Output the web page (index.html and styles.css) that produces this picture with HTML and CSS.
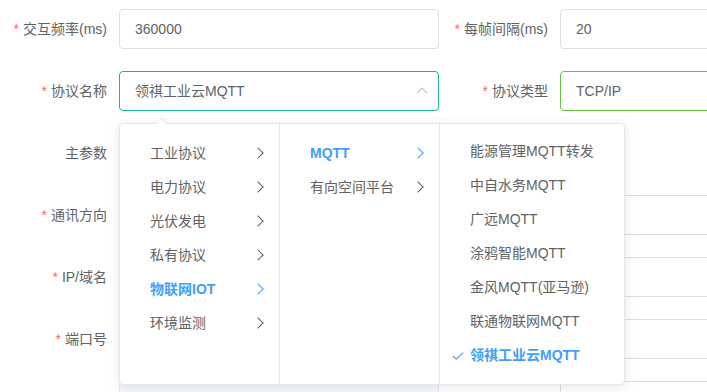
FILE: index.html
```html
<!DOCTYPE html>
<html>
  <head>
    <title>协议配置</title>
    <link rel="stylesheet" href="styles.css">
  </head>
  <body>
    <div class="page">
    <form class="form">
      <!-- row 1 -->
      <label class="label"><span class="req">*</span>交互频率(ms)</label>
      <div class="input">360000</div>
      <label class="label"><span class="req">*</span>每帧间隔(ms)</label>
      <div class="input">20</div>

      <!-- row 2 -->
      <label class="label"><span class="req">*</span>协议名称</label>
      <div class="select-wrap">
        <div class="input select">
          <span>领祺工业云MQTT</span>
          <svg class="caret" width="12" height="7" viewBox="0 0 12 7">
            <path d="M1 6 L6 1 L11 6" fill="none" stroke="#c0c4cc" stroke-width="1.2" />
          </svg>
        </div>

        <!-- cascader dropdown -->
        <div class="cascader">
          <div class="menu">
            <ul>
              <li>工业协议<i class="arrow"></i></li>
              <li>电力协议<i class="arrow"></i></li>
              <li>光伏发电<i class="arrow"></i></li>
              <li>私有协议<i class="arrow"></i></li>
              <li class="active">物联网IOT<i class="arrow"></i></li>
              <li>环境监测<i class="arrow"></i></li>
            </ul>
          </div>
          <div class="menu">
            <ul>
              <li class="active">MQTT<i class="arrow"></i></li>
              <li>有向空间平台<i class="arrow"></i></li>
            </ul>
          </div>
          <div class="menu menu-last">
            <ul>
              <li>能源管理MQTT转发</li>
              <li>中自水务MQTT</li>
              <li>广远MQTT</li>
              <li>涂鸦智能MQTT</li>
              <li>金风MQTT(亚马逊)</li>
              <li>联通物联网MQTT</li>
              <li class="active">
                <svg class="check" width="12" height="8" viewBox="0 0 12 8">
                  <path d="M0.7 3.8 L4.2 7.2 L11.3 0.7" fill="none" stroke="#409eff" stroke-width="1.1" />
                </svg>领祺工业云MQTT
              </li>
            </ul>
          </div>
        </div>
      </div>
      <label class="label"><span class="req">*</span>协议类型</label>
      <div class="input ok">TCP/IP</div>

      <!-- row 3 -->
      <label class="label">主参数</label>
      <div></div>
      <div></div>
      <div></div>

      <!-- row 4 -->
      <label class="label"><span class="req">*</span>通讯方向</label>
      <div class="input"></div>
      <label class="label"></label>
      <div class="input"></div>

      <!-- row 5 -->
      <label class="label"><span class="req">*</span>IP/域名</label>
      <div class="input"></div>
      <label class="label"></label>
      <div class="input"></div>

      <!-- row 6 -->
      <label class="label"><span class="req">*</span>端口号</label>
      <div class="input"></div>
      <label class="label"></label>
      <div class="input"></div>

      <!-- row 7 -->
      <label class="label"></label>
      <div class="input disabled"></div>
      <label class="label"></label>
      <div class="input"></div>
    </form>
    </div>
  </body>
</html>
```

FILE: styles.css
```css
html, body {
  margin: 0;
  padding: 0;
  background: #fff;
  overflow: hidden;
}
body {
  font-family: "Liberation Sans", "Noto Sans CJK SC", sans-serif;
  font-size: 14px;
  color: #606266;
}
.page {
  width: 707px;
  height: 392px;
  overflow: hidden;
}
.form {
  display: grid;
  grid-template-columns: 119px 320px 121px 320px;
  grid-auto-rows: 40px;
  row-gap: 22px;
  padding-top: 9px;
  width: 880px;
}
.label {
  text-align: right;
  padding-right: 12px;
  line-height: 40px;
  color: #606266;
  white-space: nowrap;
}
.req {
  color: #f56c6c;
  margin-right: 4px;
}
.input {
  box-sizing: border-box;
  height: 40px;
  line-height: 38px;
  border: 1px solid #dcdfe6;
  border-radius: 4px;
  padding: 0 15px;
  background: #fff;
  color: #606266;
}
.input.ok {
  border-color: #67c23a;
}
.input.disabled {
  background: #f5f7fa;
  border-color: #e4e7ed;
}
.select-wrap {
  position: relative;
}
.select {
  border-color: #1ab394;
  display: flex;
  justify-content: space-between;
  align-items: center;
  padding-right: 10px;
}
.caret {
  display: block;
  margin-top: -2px;
}

/* cascader popup */
.cascader {
  position: absolute;
  top: 52px;
  left: 0;
  z-index: 10;
  display: flex;
  background: #fff;
  border: 1px solid #e4e7ed;
  border-radius: 4px;
  box-shadow: 0 2px 12px 0 rgba(0, 0, 0, 0.1);
}
.cascader::before,
.cascader::after {
  content: "";
  position: absolute;
  left: 35px;
  border: 6px solid transparent;
  border-top-width: 0;
}
.cascader::before {
  top: -6px;
  border-bottom-color: #e4e7ed;
}
.cascader::after {
  top: -5px;
  border-bottom-color: #fff;
}
.menu {
  width: 159px;
  height: 260px;
  border-right: 1px solid #e4e7ed;
}
.menu-last {
  width: 184px;
  border-right: none;
}
.menu ul {
  list-style: none;
  margin: 0;
  padding: 12px 0 0;
}
.menu-last ul {
  padding-top: 10px;
}
.menu li {
  position: relative;
  height: 34px;
  line-height: 34px;
  padding: 0 30px;
  white-space: nowrap;
}
.menu li.active {
  color: #409eff;
  font-weight: bold;
}
.arrow {
  position: absolute;
  right: 17px;
  top: 13px;
  width: 7px;
  height: 7px;
  border-top: 1px solid #606266;
  border-right: 1px solid #606266;
  transform: rotate(45deg);
}
.active .arrow {
  border-color: #409eff;
}
.check {
  position: absolute;
  left: 12px;
  top: 14px;
}
```
